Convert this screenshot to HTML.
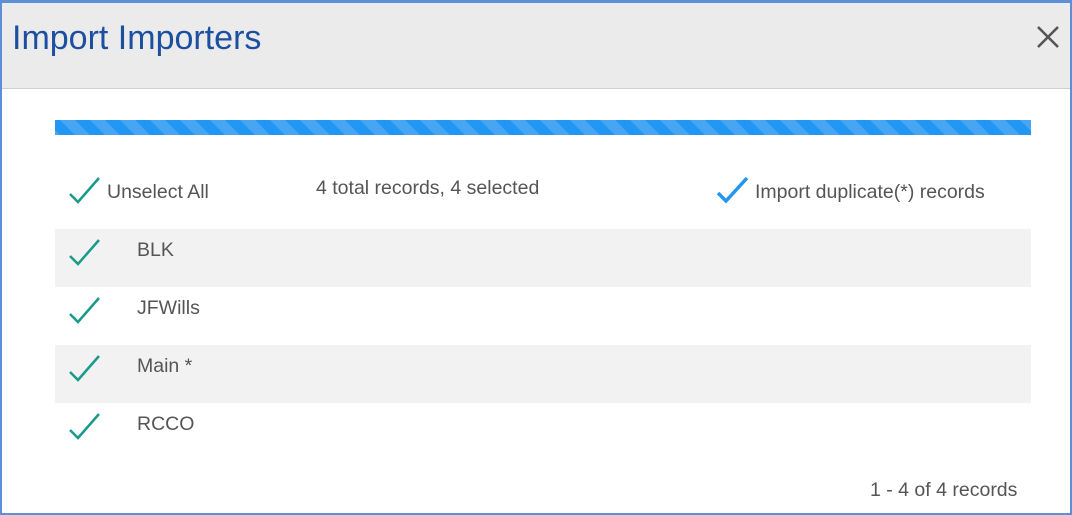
<!DOCTYPE html>
<html><head><style>
*{margin:0;padding:0;box-sizing:border-box}
body{width:1072px;height:515px;overflow:hidden;background:#fff;font-family:"Liberation Sans",sans-serif;color:#555}
.frame{position:absolute;left:0;top:0;width:1072px;height:515px;border:2px solid #5b8fd6;border-top-width:3px}
.hdr{position:absolute;left:2px;top:3px;width:1068px;height:86px;background:#ebebeb;border-bottom:1px solid #d0d0d0}
.title{position:absolute;left:10px;top:16px;font-size:34px;color:#1c4fa0}
.close{position:absolute;left:1034px;top:22px}
.bar{position:absolute;left:55px;top:120px}
.t{position:absolute;font-size:19.5px;color:#555}
.row{position:absolute;left:55px;width:976px;height:58px}
.g{background:#f2f2f2}
svg.ck{position:absolute}
</style></head><body>
<div class="frame"></div>
<div class="hdr"><div class="title">Import Importers</div>
<svg class="close" width="24" height="24" viewBox="0 0 24 24"><path d="M2 2L22 22M22 2L2 22" stroke="#555" stroke-width="2.6"/></svg></div>
<svg class="bar" width="976" height="15" viewBox="0 0 976 15">
<defs><pattern id="p" width="30" height="15" patternUnits="userSpaceOnUse" x="-2">
<rect width="30" height="15" fill="#2196f3"/>
<path d="M7 0H22L37 15H22Z M-8 0H7L22 15H7Z" fill="#2196f3"/>
<path d="M7 0H22L37 15H22Z M-23 0H-8L7 15H-8Z" fill="#46a6f3"/>
</pattern></defs>
<rect width="976" height="15" fill="url(#p)"/></svg>
<svg class="ck" style="left:68px;top:176px" width="34" height="28" viewBox="0 0 34 28"><path d="M2 18L10 26L31 2" fill="none" stroke="#1a9a8a" stroke-width="2.5"/></svg>
<div class="t" style="left:107px;top:181px">Unselect All</div>
<div class="t" style="left:316px;top:177px">4 total records, 4 selected</div>
<svg class="ck" style="left:716px;top:176px" width="34" height="28" viewBox="0 0 34 28"><path d="M2 17L10 25L31 2" fill="none" stroke="#2196f3" stroke-width="3.5"/></svg>
<div class="t" style="left:755px;top:181px">Import duplicate(*) records</div>
<div class="row g" style="top:229px"></div>
<div class="row" style="top:287px"></div>
<div class="row g" style="top:345px"></div>
<svg class="ck" style="left:68px;top:238px" width="34" height="28" viewBox="0 0 34 28"><path d="M2 18L10 26L31 2" fill="none" stroke="#1a9a8a" stroke-width="2.5"/></svg>
<div class="t" style="left:137px;top:239px">BLK</div>
<svg class="ck" style="left:68px;top:296px" width="34" height="28" viewBox="0 0 34 28"><path d="M2 18L10 26L31 2" fill="none" stroke="#1a9a8a" stroke-width="2.5"/></svg>
<div class="t" style="left:137px;top:297px">JFWills</div>
<svg class="ck" style="left:68px;top:354px" width="34" height="28" viewBox="0 0 34 28"><path d="M2 18L10 26L31 2" fill="none" stroke="#1a9a8a" stroke-width="2.5"/></svg>
<div class="t" style="left:137px;top:355px">Main *</div>
<svg class="ck" style="left:68px;top:412px" width="34" height="28" viewBox="0 0 34 28"><path d="M2 18L10 26L31 2" fill="none" stroke="#1a9a8a" stroke-width="2.5"/></svg>
<div class="t" style="left:137px;top:413px">RCCO</div>
<div class="t" style="left:870px;top:479px">1 - 4 of 4 records</div>
</body></html>
